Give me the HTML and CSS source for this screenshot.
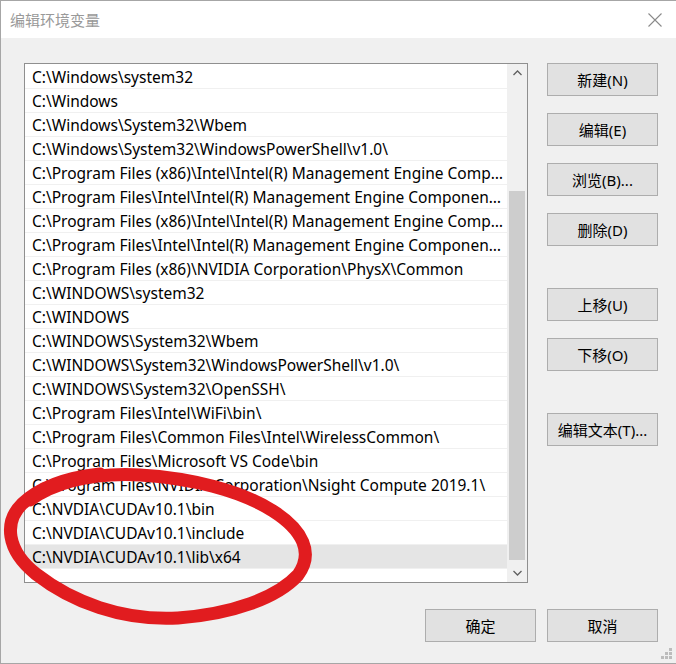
FILE: index.html
```html
<!DOCTYPE html>
<html lang="zh-CN">
<head>
    <meta charset="UTF-8">
    <title>编辑环境变量</title>
    <link rel="stylesheet" href="styles.css">
</head>
<body>
    <div class="window">
        <div class="title-bar">
            <span class="title">编辑环境变量</span>
            <svg class="close-icon" width="14" height="14" viewBox="0 0 14 14">
                <path d="M0.5 0.5 L13.5 13.5 M13.5 0.5 L0.5 13.5" stroke="#8a8a8a" stroke-width="1.1" fill="none"/>
            </svg>
        </div>

        <div class="content">
            <div class="main-row">
                <div class="path-list">
                    <div class="rows">
                        <div class="row">C:\Windows\system32</div>
                        <div class="row">C:\Windows</div>
                        <div class="row">C:\Windows\System32\Wbem</div>
                        <div class="row">C:\Windows\System32\WindowsPowerShell\v1.0\</div>
                        <div class="row">C:\Program Files (x86)\Intel\Intel(R) Management Engine Components\DAL</div>
                        <div class="row">C:\Program Files\Intel\Intel(R) Management Engine Components\DAL</div>
                        <div class="row">C:\Program Files (x86)\Intel\Intel(R) Management Engine Components\IPT</div>
                        <div class="row">C:\Program Files\Intel\Intel(R) Management Engine Components\IPT</div>
                        <div class="row">C:\Program Files (x86)\NVIDIA Corporation\PhysX\Common</div>
                        <div class="row">C:\WINDOWS\system32</div>
                        <div class="row">C:\WINDOWS</div>
                        <div class="row">C:\WINDOWS\System32\Wbem</div>
                        <div class="row">C:\WINDOWS\System32\WindowsPowerShell\v1.0\</div>
                        <div class="row">C:\WINDOWS\System32\OpenSSH\</div>
                        <div class="row">C:\Program Files\Intel\WiFi\bin\</div>
                        <div class="row">C:\Program Files\Common Files\Intel\WirelessCommon\</div>
                        <div class="row">C:\Program Files\Microsoft VS Code\bin</div>
                        <div class="row">C:\Program Files\NVIDIA Corporation\Nsight Compute 2019.1\</div>
                        <div class="row">C:\NVDIA\CUDAv10.1\bin</div>
                        <div class="row">C:\NVDIA\CUDAv10.1\include</div>
                        <div class="row selected">C:\NVDIA\CUDAv10.1\lib\x64</div>
                    </div>
                    <div class="scrollbar">
                        <div class="scroll-btn">
                            <svg width="9" height="6" viewBox="0 0 9 6"><path d="M0.5 5 L4.5 1 L8.5 5" stroke="#606060" stroke-width="1.3" fill="none"/></svg>
                        </div>
                        <div class="scroll-track">
                            <div class="scroll-thumb"></div>
                        </div>
                        <div class="scroll-btn">
                            <svg width="9" height="6" viewBox="0 0 9 6"><path d="M0.5 1 L4.5 5 L8.5 1" stroke="#606060" stroke-width="1.3" fill="none"/></svg>
                        </div>
                    </div>
                </div>

                <div class="side-buttons">
                    <button class="btn">新建(N)</button>
                    <button class="btn">编辑(E)</button>
                    <button class="btn">浏览(B)...</button>
                    <button class="btn">删除(D)</button>
                    <button class="btn group-start">上移(U)</button>
                    <button class="btn">下移(O)</button>
                    <button class="btn group-start">编辑文本(T)...</button>
                </div>
            </div>

            <div class="footer">
                <button class="btn">确定</button>
                <button class="btn">取消</button>
            </div>
        </div>

        <svg class="grip" width="12" height="12" viewBox="0 0 12 12">
            <rect x="8" y="0" width="3" height="3" fill="#bcbcbc"/>
            <rect x="4" y="4" width="3" height="3" fill="#bcbcbc"/>
            <rect x="8" y="4" width="3" height="3" fill="#bcbcbc"/>
            <rect x="0" y="8" width="3" height="3" fill="#bcbcbc"/>
            <rect x="4" y="8" width="3" height="3" fill="#bcbcbc"/>
            <rect x="8" y="8" width="3" height="3" fill="#bcbcbc"/>
        </svg>

        <!-- hand-drawn annotation over the last three rows -->
        <svg class="annotation" width="676" height="664" viewBox="0 0 676 664">
            <path d="M30 500 C 60 479, 100 473, 140 475 C 190 478, 240 490, 273 511 C 303 530, 314 553, 298 575 C 277 598, 232 614, 178 618 C 122 621, 72 602, 36 574 C 6 550, 4 522, 22 504 C 42 485, 72 477, 100 474"
                  stroke="#e11c1f" stroke-width="13" fill="none" stroke-linecap="round" stroke-linejoin="round"/>
        </svg>
    </div>
</body>
</html>
```

FILE: styles.css
```css
body {
    margin: 0;
    font-family: "Noto Sans", "Noto Sans CJK SC", sans-serif;
    font-size: 15px;
    color: #000;
    background: #f0f0f0;
}

.window {
    position: relative;
    width: 676px;
    height: 664px;
    box-sizing: border-box;
    border-top: 1px solid #a6a6a6;
    border-left: 1px solid #a6a6a6;
    border-bottom: 1px solid #a6a6a6;
    background: #f0f0f0;
    display: flex;
    flex-direction: column;
    overflow: hidden;
}

.title-bar {
    height: 37px;
    background: #fff;
    display: flex;
    align-items: center;
    justify-content: space-between;
    padding: 0 14px 0 9px;
}

.title {
    color: #999;
    font-size: 15px;
}

.close-icon {
    display: block;
    margin-top: 1px;
}

.content {
    flex: 1;
    padding: 25px 18px 0 23px;
    display: flex;
    flex-direction: column;
}

.main-row {
    display: flex;
    gap: 19px;
}

.path-list {
    width: 504px;
    height: 520px;
    box-sizing: border-box;
    border: 1px solid #8f8f8f;
    background: #fff;
    display: flex;
}

.rows {
    flex: 1;
    min-width: 0;
    padding-top: 1px;
}

.row {
    height: 24px;
    line-height: 21px;
    padding: 2px 2px 0 7px;
    box-sizing: border-box;
    border-bottom: 1px solid #f0f0f0;
    font-size: 15.5px;
    white-space: nowrap;
    overflow: hidden;
    text-overflow: ellipsis;
}

.row.selected {
    background: #e5e5e5;
}

.scrollbar {
    width: 20px;
    background: #f0f0f0;
    display: flex;
    flex-direction: column;
}

.scroll-btn {
    height: 18px;
    display: flex;
    align-items: center;
    justify-content: center;
}

.scroll-track {
    flex: 1;
    padding: 0 2px;
}

.scroll-thumb {
    margin-top: 109px;
    height: 369px;
    background: #cdcdcd;
}

.side-buttons {
    display: flex;
    flex-direction: column;
    gap: 17px;
}

.btn {
    width: 111px;
    height: 33px;
    box-sizing: border-box;
    border: 1px solid #adadad;
    background: #e1e1e1;
    font-family: "Noto Sans", "Noto Sans CJK SC", sans-serif;
    font-size: 15px;
    color: #000;
    padding: 0;
    cursor: pointer;
}

.btn.group-start {
    margin-top: 25px;
}

.footer {
    display: flex;
    justify-content: flex-end;
    gap: 11px;
    margin-top: 26px;
}

.grip {
    position: absolute;
    right: 3px;
    bottom: 3px;
}

.annotation {
    position: absolute;
    left: -1px;
    top: -1px;
    pointer-events: none;
}
```
